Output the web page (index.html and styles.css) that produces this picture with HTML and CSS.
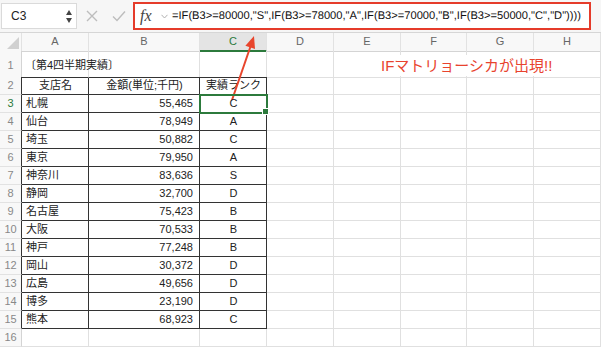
FILE: index.html
```html
<!DOCTYPE html>
<html lang="ja">

<head>
  <meta charset="UTF-8">
  <meta name="viewport" content="width=device-width, initial-scale=1.0">
  <title>IF関数</title>
  <link rel="stylesheet" href="styles.css">
</head>

<body>
  <div class="toolbar">
    <div class="namebox">
      <span>C3</span>
      <div class="spin"><i class="up"></i><i class="down"></i></div>
    </div>
    <div class="actions">
      <svg width="12" height="12" viewBox="0 0 12 12"><path d="M1 1L11 11M11 1L1 11" stroke="#bdbdbd" stroke-width="1.4" fill="none"/></svg>
      <svg width="14" height="12" viewBox="0 0 14 12"><path d="M1 6.5L5 10.5L13 1.5" stroke="#bdbdbd" stroke-width="1.4" fill="none"/></svg>
    </div>
    <div class="formula">
      <span class="fx">fx</span>
      <svg class="chev" width="7" height="5" viewBox="0 0 7 5"><path d="M0.5 0.8L3.5 4L6.5 0.8" stroke="#b0b0b0" stroke-width="1" fill="none"/></svg>
      <span class="expr">=IF(B3&gt;=80000,"S",IF(B3&gt;=78000,"A",IF(B3&gt;=70000,"B",IF(B3&gt;=50000,"C","D"))))</span>
    </div>
  </div>

  <div class="sheet">
    <div class="row head">
      <div class="corner"><i></i></div>
      <div class="ch">A</div><div class="ch">B</div><div class="ch on">C</div><div class="ch">D</div>
      <div class="ch">E</div><div class="ch">F</div><div class="ch">G</div><div class="ch">H</div>
    </div>
    <div class="row tall">
      <div class="rh">1</div>
      <div class="cell top title">〔第4四半期実績〕</div><div class="cell top"></div><div class="cell top"></div><div class="cell"></div>
      <div class="cell"></div><div class="cell"></div><div class="cell"></div><div class="cell"></div>
    </div>
    <div class="row">
      <div class="rh edge">2</div>
      <div class="cell t mid">支店名</div><div class="cell t mid">金額(単位;千円)</div><div class="cell t mid">実績ランク</div><div class="cell"></div>
      <div class="cell"></div><div class="cell"></div><div class="cell"></div><div class="cell"></div>
    </div>
    <div class="row">
      <div class="rh edge active">3</div>
      <div class="cell t">札幌</div><div class="cell t num">55,465</div><div class="cell t mid sel">C</div><div class="cell"></div>
      <div class="cell"></div><div class="cell"></div><div class="cell"></div><div class="cell"></div>
    </div>
    <div class="row">
      <div class="rh edge">4</div>
      <div class="cell t">仙台</div><div class="cell t num">78,949</div><div class="cell t mid">A</div><div class="cell"></div>
      <div class="cell"></div><div class="cell"></div><div class="cell"></div><div class="cell"></div>
    </div>
    <div class="row">
      <div class="rh edge">5</div>
      <div class="cell t">埼玉</div><div class="cell t num">50,882</div><div class="cell t mid">C</div><div class="cell"></div>
      <div class="cell"></div><div class="cell"></div><div class="cell"></div><div class="cell"></div>
    </div>
    <div class="row">
      <div class="rh edge">6</div>
      <div class="cell t">東京</div><div class="cell t num">79,950</div><div class="cell t mid">A</div><div class="cell"></div>
      <div class="cell"></div><div class="cell"></div><div class="cell"></div><div class="cell"></div>
    </div>
    <div class="row">
      <div class="rh edge">7</div>
      <div class="cell t">神奈川</div><div class="cell t num">83,636</div><div class="cell t mid">S</div><div class="cell"></div>
      <div class="cell"></div><div class="cell"></div><div class="cell"></div><div class="cell"></div>
    </div>
    <div class="row">
      <div class="rh edge">8</div>
      <div class="cell t">静岡</div><div class="cell t num">32,700</div><div class="cell t mid">D</div><div class="cell"></div>
      <div class="cell"></div><div class="cell"></div><div class="cell"></div><div class="cell"></div>
    </div>
    <div class="row">
      <div class="rh edge">9</div>
      <div class="cell t">名古屋</div><div class="cell t num">75,423</div><div class="cell t mid">B</div><div class="cell"></div>
      <div class="cell"></div><div class="cell"></div><div class="cell"></div><div class="cell"></div>
    </div>
    <div class="row">
      <div class="rh edge">10</div>
      <div class="cell t">大阪</div><div class="cell t num">70,533</div><div class="cell t mid">B</div><div class="cell"></div>
      <div class="cell"></div><div class="cell"></div><div class="cell"></div><div class="cell"></div>
    </div>
    <div class="row">
      <div class="rh edge">11</div>
      <div class="cell t">神戸</div><div class="cell t num">77,248</div><div class="cell t mid">B</div><div class="cell"></div>
      <div class="cell"></div><div class="cell"></div><div class="cell"></div><div class="cell"></div>
    </div>
    <div class="row">
      <div class="rh edge">12</div>
      <div class="cell t">岡山</div><div class="cell t num">30,372</div><div class="cell t mid">D</div><div class="cell"></div>
      <div class="cell"></div><div class="cell"></div><div class="cell"></div><div class="cell"></div>
    </div>
    <div class="row">
      <div class="rh edge">13</div>
      <div class="cell t">広島</div><div class="cell t num">49,656</div><div class="cell t mid">D</div><div class="cell"></div>
      <div class="cell"></div><div class="cell"></div><div class="cell"></div><div class="cell"></div>
    </div>
    <div class="row">
      <div class="rh edge">14</div>
      <div class="cell t">博多</div><div class="cell t num">23,190</div><div class="cell t mid">D</div><div class="cell"></div>
      <div class="cell"></div><div class="cell"></div><div class="cell"></div><div class="cell"></div>
    </div>
    <div class="row">
      <div class="rh edge">15</div>
      <div class="cell t">熊本</div><div class="cell t num">68,923</div><div class="cell t mid">C</div><div class="cell"></div>
      <div class="cell"></div><div class="cell"></div><div class="cell"></div><div class="cell"></div>
    </div>
    <div class="row">
      <div class="rh">16</div>
      <div class="cell"></div><div class="cell"></div><div class="cell"></div><div class="cell"></div>
      <div class="cell"></div><div class="cell"></div><div class="cell"></div><div class="cell"></div>
    </div>
  </div>

  <div class="note">IFマトリョーシカが出現!!</div>

  <svg class="arrow" width="601" height="347" viewBox="0 0 601 347">
    <line x1="232" y1="100" x2="250.5" y2="46.5" stroke="#e8452c" stroke-width="2"/>
    <polygon points="254,36 255,49 245.4,45.7" fill="#e8452c"/>
  </svg>
</body>

</html>
```

FILE: styles.css
```css
body {
  margin: 0;
  width: 601px;
  height: 347px;
  overflow: hidden;
  font-family: "Liberation Sans", "Noto Sans CJK JP", sans-serif;
  color: #222;
  background: #fff;
  position: relative;
}

/* toolbar */

.toolbar {
  height: 32px;
  display: flex;
  align-items: center;
  background: #f6f6f6;
  border-bottom: 1px solid #d6d6d6;
}

.namebox {
  width: 76px;
  height: 26px;
  box-sizing: border-box;
  margin-left: 1px;
  background: #fff;
  border: 1px solid #dadada;
  display: flex;
  align-items: center;
  justify-content: space-between;
  padding: 0 4px 0 9px;
  font-size: 12px;
}

.spin {
  display: flex;
  flex-direction: column;
  gap: 3px;
}

.spin i {
  width: 0;
  height: 0;
  border-left: 3.5px solid transparent;
  border-right: 3.5px solid transparent;
}

.spin .up {
  border-bottom: 5px solid #444;
}

.spin .down {
  border-top: 5px solid #444;
}

.actions {
  width: 54px;
  display: flex;
  align-items: center;
  justify-content: space-around;
  padding-left: 2px;
}

.formula {
  flex: 1;
  height: 28px;
  box-sizing: border-box;
  margin-right: 10px;
  border: 2px solid #e53b2a;
  background: #fff;
  display: flex;
  align-items: center;
  padding-left: 5px;
}

.fx {
  font-family: "Liberation Serif", serif;
  font-style: italic;
  font-size: 16px;
  color: #444;
  width: 16px;
}

.chev {
  margin: 0 4px 0 5px;
}

.expr {
  font-size: 11.15px;
  text-rendering: geometricPrecision;
  color: #111;
  white-space: nowrap;
}

/* sheet */

.row {
  display: grid;
  grid-template-columns: 22px 67px 111px 67px 67px 67px 66px 67px 67px;
  height: 18px;
}

.row.tall {
  height: 26px;
}

.row > div {
  box-sizing: border-box;
  font-size: 11px;
  line-height: 17px;
  white-space: nowrap;
  position: relative;
}

.row.tall > div {
  line-height: 24px;
  padding-top: 2px;
}

.head {
  background: #f8f8f8;
}

.head > div {
  border-bottom: 1px solid #d4d4d4;
  border-right: 1px solid #e2e2e2;
}

.corner i {
  position: absolute;
  right: 2px;
  bottom: 2px;
  width: 0;
  height: 0;
  border-left: 12px solid transparent;
  border-bottom: 12px solid #d0d0d0;
}

.ch {
  text-align: center;
  color: #666;
}

.ch.on {
  background: #e4e4e4;
  color: #2c7a3c;
  border-bottom: 2px solid #2c7a3c !important;
}

.rh {
  background: #f8f8f8;
  text-align: center;
  color: #888;
  border-right: 1px solid #d4d4d4;
  border-bottom: 1px solid #e2e2e2;
}

.rh.active {
  color: #2c7a3c;
}

.rh.edge {
  border-right-color: #333;
}

.cell {
  border-right: 1px solid #e0e0e0;
  border-bottom: 1px solid #e0e0e0;
  padding: 0 3px;
}

.cell.top {
  border-bottom-color: #333;
}

.cell.t {
  border-right-color: #333;
  border-bottom-color: #333;
  padding-left: 4px;
}

.cell.title {
  overflow: visible;
  z-index: 1;
}

.cell.mid {
  text-align: center;
}

.cell.num {
  text-align: right;
  padding-right: 6px;
}

.cell.sel {
  outline: 2px solid #2c7a3c;
  outline-offset: -1px;
  z-index: 2;
}

.cell.sel::after {
  content: "";
  position: absolute;
  right: -3px;
  bottom: -3px;
  width: 5px;
  height: 5px;
  background: #2c7a3c;
  border: 1px solid #fff;
}

/* annotation */

.note {
  position: absolute;
  left: 378px;
  top: 55px;
  height: 21px;
  line-height: 21px;
  padding: 0 3px;
  background: #fff;
  color: #e8432e;
  font-size: 15px;
  white-space: nowrap;
}

.arrow {
  position: absolute;
  left: 0;
  top: 0;
  pointer-events: none;
}
```
